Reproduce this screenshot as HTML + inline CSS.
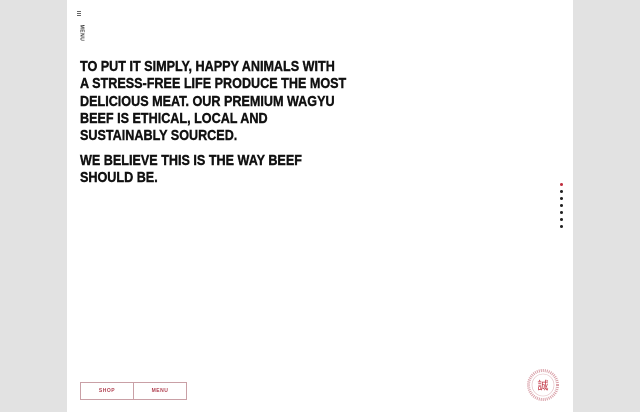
<!DOCTYPE html>
<html><head><style>
html,body{margin:0;padding:0;width:640px;height:412px;overflow:hidden;background:#e2e2e2;}
.panel{position:absolute;left:67px;top:0;width:506px;height:412px;background:#fff;}
.txt{position:absolute;left:80px;font-family:"Liberation Sans",sans-serif;font-weight:bold;font-size:15px;color:#111;line-height:17.3px;-webkit-text-stroke:0.4px #111;}
.txt div{white-space:nowrap;transform:scaleX(0.84);transform-origin:left;}
.btns{position:absolute;left:80px;top:382px;width:105px;height:16px;border:1px solid #c9a0a6;display:flex;}
.btns div{flex:1;font:bold 5px "Liberation Sans",sans-serif;letter-spacing:0.5px;color:#b04050;text-align:center;line-height:16px;}
.btns div+div{border-left:1px solid #c9a0a6;}
.dot{position:absolute;left:560px;width:3px;height:3px;border-radius:50%;background:#222;}
</style></head><body>
<div class="panel"></div>
<div style="position:absolute;left:77px;top:11px;width:4px;height:1px;background:#666;box-shadow:0 2px 0 #666,0 4px 0 #666"></div>
<div style="position:absolute;left:73px;top:30px;font:bold 5px 'Liberation Sans',sans-serif;color:#333;transform:rotate(90deg);letter-spacing:0.5px">MENU</div>
<div class="txt" style="top:58px">
<div>TO PUT IT SIMPLY, HAPPY ANIMALS WITH</div>
<div>A STRESS-FREE LIFE PRODUCE THE MOST</div>
<div>DELICIOUS MEAT. OUR PREMIUM WAGYU</div>
<div>BEEF IS ETHICAL, LOCAL AND</div>
<div>SUSTAINABLY SOURCED.</div>
</div>
<div class="txt" style="top:152px">
<div>WE BELIEVE THIS IS THE WAY BEEF</div>
<div>SHOULD BE.</div>
</div>
<div class="dot" style="top:183px;background:#c03040"></div>
<div class="dot" style="top:190px"></div>
<div class="dot" style="top:197px"></div>
<div class="dot" style="top:204px"></div>
<div class="dot" style="top:211px"></div>
<div class="dot" style="top:218px"></div>
<div class="dot" style="top:225px"></div>
<svg style="position:absolute;left:524px;top:368px" width="38" height="34" viewBox="0 0 38 34">
<circle cx="19" cy="17" r="14.5" fill="none" stroke="#d9a0a8" stroke-width="3" stroke-dasharray="1 1"/>
<circle cx="19" cy="17" r="11" fill="none" stroke="#e0b8bd" stroke-width="0.6"/>
<text x="19" y="21" font-size="11" fill="#c03040" text-anchor="middle" font-family="Noto Sans CJK SC,sans-serif">誠</text>
</svg>
<div class="btns"><div>SHOP</div><div>MENU</div></div>
</body></html>
